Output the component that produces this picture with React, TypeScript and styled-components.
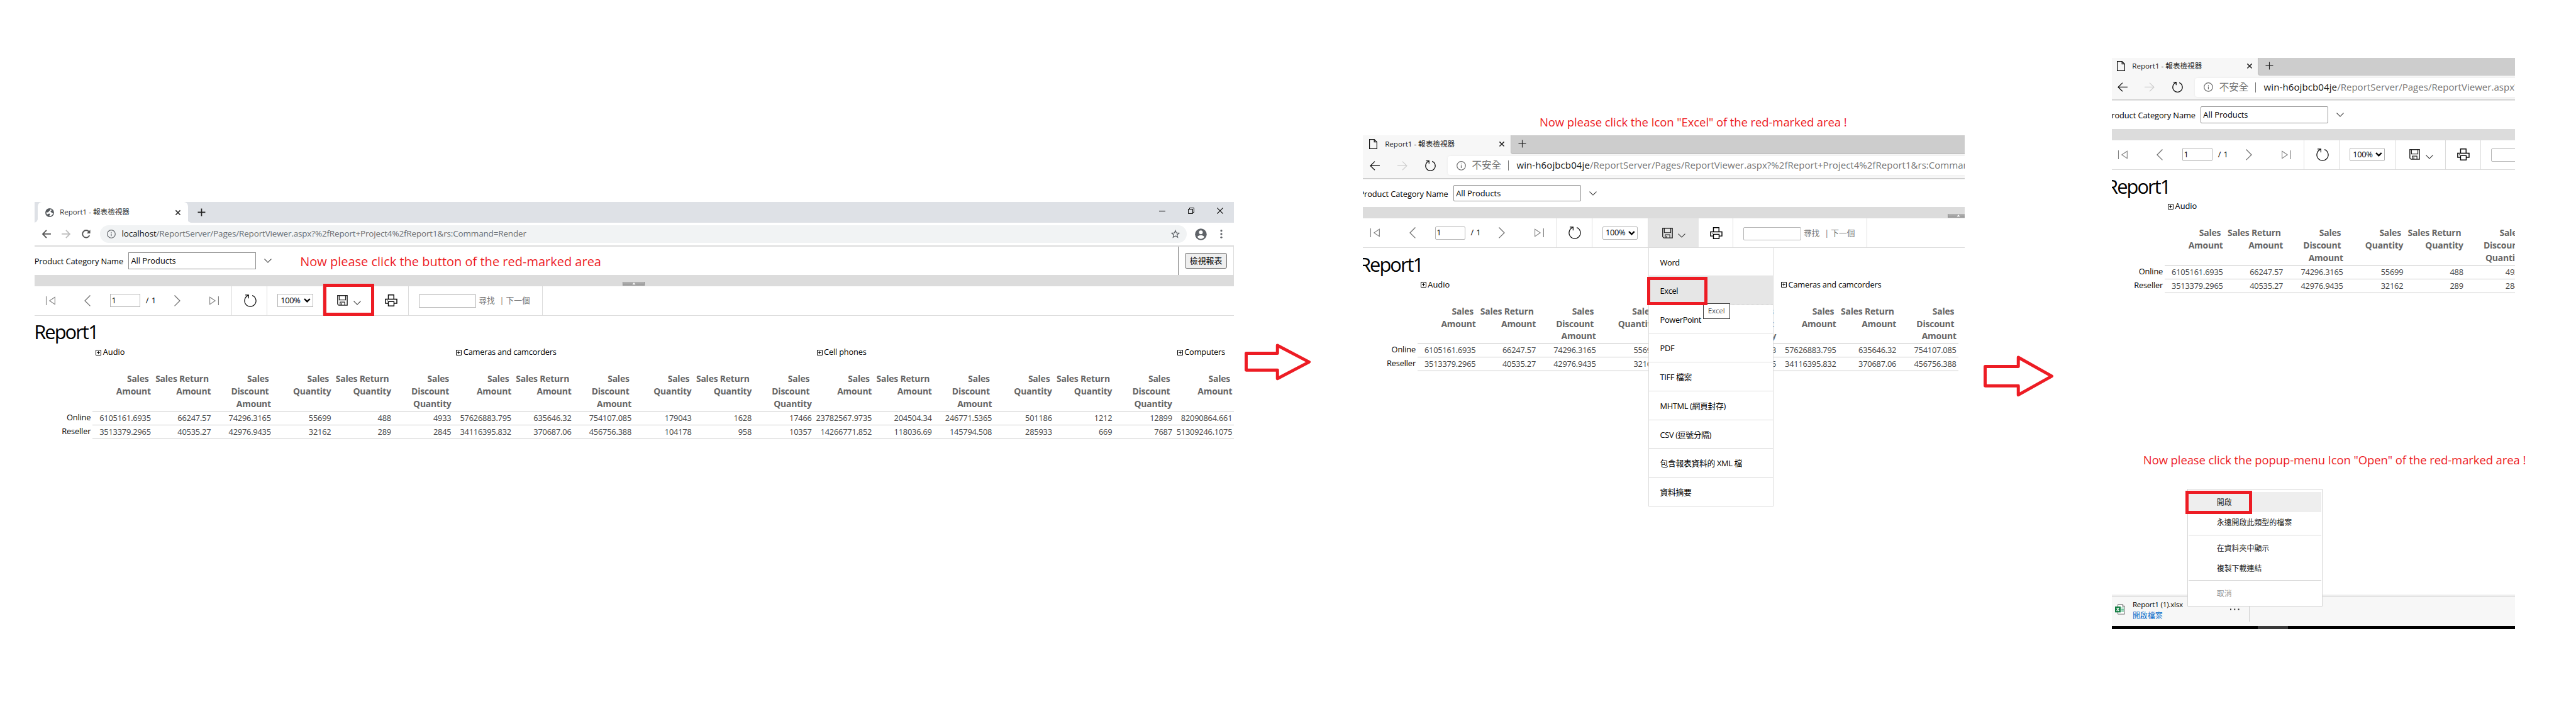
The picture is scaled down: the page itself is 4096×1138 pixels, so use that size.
import React from 'react';
import styled, { createGlobalStyle, css } from 'styled-components';

const Global = createGlobalStyle`
  html, body { margin: 0; padding: 0; background: #fff; overflow: hidden; }
  * { box-sizing: border-box; }
  svg { display: block; flex: none; overflow: visible; }
`;

const SCALE = 4096 / 4116;
const RED = '#ed1c24';
const LINE = '#dcdcdc';

const Stage = styled.main`
  zoom: ${SCALE};
  display: flex;
  align-items: flex-start;
  width: 4116px;
  height: 1143px;
  padding-left: 55px;
  overflow: hidden;
  background: #fff;
  color: #000;
  font-family: 'Open Sans', 'Noto Sans CJK TC', sans-serif;
  font-size: 12.9px;
  line-height: 20px;
  white-space: pre;
`;

const Step = styled.section<{ $left?: number; $top: number; $w: number }>`
  position: relative;
  flex: none;
  margin: ${p => p.$top}px 0 0 ${p => p.$left ?? 0}px;
  width: ${p => p.$w}px;
`;

const Window = styled.div<{ $h: number }>`
  display: flex;
  flex-direction: column;
  width: 100%;
  height: ${p => p.$h}px;
  overflow: hidden;
  background: #fff;
`;

const ArrowBox = styled.div<{ $left: number; $top: number }>`
  flex: none;
  margin: ${p => p.$top}px 0 0 ${p => p.$left}px;
`;

const Note = styled.p<{ $size: number; $ls: number }>`
  margin: 0;
  color: ${RED};
  font-size: ${p => p.$size}px;
  letter-spacing: ${p => p.$ls}px;
  line-height: 30px;
`;
const InlineNote = styled(Note)`
  margin-left: 45px;
  padding-top: 2px;
`;
const TopNote = styled(Note)`
  padding-left: 282px;
  margin-bottom: 6px;
`;
const FloatingNote = styled(Note)`
  position: absolute;
  left: 50.5px;
  top: 628px;
`;

const RedMark = styled.div<{ $x: number; $y: number; $w: number; $h: number }>`
  position: absolute;
  z-index: 5;
  left: ${p => p.$x}px;
  top: ${p => p.$y}px;
  width: ${p => p.$w}px;
  height: ${p => p.$h}px;
  border: 5.04px solid ${RED};
`;

/* ---------- Chrome ---------- */

const ChromeStrip = styled.div`
  display: flex;
  flex: none;
  align-items: center;
  height: 33px;
  padding: 0 18px 0 5px;
  background: #dee1e6;
`;
const ChromeTab = styled.div`
  position: relative;
  display: flex;
  align-items: center;
  width: 240px;
  height: 33px;
  padding: 0 12px 0 12.5px;
  border-radius: 7px 7px 0 0;
  background: #fff;
  &::before, &::after {
    content: '';
    position: absolute;
    bottom: 0;
    width: 6px;
    height: 6px;
  }
  &::before { left: -6px; background: radial-gradient(circle at 0 0, transparent 5.5px, #fff 6.2px); }
  &::after { right: -6px; background: radial-gradient(circle at 100% 0, transparent 5.5px, #fff 6.2px); }
`;
const TabText = styled.span`
  flex: 1;
  font-size: 11.7px;
  letter-spacing: -0.02px;
  color: #333;
`;
const ChromeTabText = styled(TabText)`
  margin-left: 9px;
  padding-bottom: 2px;
`;
const StripPlus = styled.div`
  flex: 1;
  padding-left: 15.5px;
`;
const Controls = styled.div`
  display: flex;
  align-items: center;
  gap: 36px;
  padding-bottom: 6px;
`;
const ChromeBar = styled.div`
  display: flex;
  flex: none;
  align-items: center;
  height: 38px;
  padding: 0 19px 0 12px;
  border-bottom: 2.03px solid #dcdcdc;
`;
const ChromeNav = styled.div`
  display: flex;
  align-items: center;
  gap: 18px;
  width: 93px;
`;
const Pill = styled.div`
  display: flex;
  align-items: center;
  width: 1736px;
  height: 28px;
  padding: 0 11px;
  border-radius: 14px;
  background: #f1f3f4;
`;
const PillUrl = styled.span`
  flex: 1;
  margin-left: 9.5px;
  font-size: 13.6px;
  letter-spacing: -0.175px;
  color: #6a6e73;
`;
const Host = styled.span`
  color: #111;
`;
const Profile = styled.div`
  display: flex;
  flex: 1;
  align-items: center;
  justify-content: space-between;
  padding-left: 13px;
`;

/* ---------- Edge ---------- */

const EdgeHead = styled.div<{ $clipped?: boolean }>`
  flex: none;
  height: 70px;
  background: #f7f7f7;
  border-bottom: 1px solid #e2e2e2;
  ${p => p.$clipped && css`margin: -1px 0 0 -2px;`}
`;
const EdgeStrip = styled.div`
  display: flex;
  height: 30px;
`;
const EdgeTab = styled.div`
  display: flex;
  align-items: center;
  width: 236px;
  padding: 0 10px 2px 10px;
`;
const EdgeTabText = styled(TabText)`
  margin-left: 12px;
  color: #222;
`;
const EdgeStripRest = styled.div`
  flex: 1;
  padding: 7px 0 0 11px;
  border-bottom: 1px solid #b9b9b9;
  border-left: 1px solid #bcbcbc;
  border-bottom-left-radius: 4px;
  background: #cdcdcd;
`;
const EdgeBar = styled.div`
  display: flex;
  align-items: center;
  height: 39px;
  padding: 0 0 1px 11px;
  border-bottom: 1px solid #c9c9c9;
`;
const EdgeNav = styled.div`
  display: flex;
  flex: none;
  align-items: center;
  gap: 28px;
  width: 124px;
`;
const EdgeField = styled.div`
  display: flex;
  flex: 1;
  min-width: 0;
  align-items: center;
  height: 30px;
  padding-left: 14px;
  border-radius: 4px 0 0 4px;
  background: #fff;
  box-shadow: 0 0 3px #e6e6e6;
  overflow: hidden;
`;
const Insecure = styled.span`
  flex: none;
  margin-left: 10px;
  padding-right: 11px;
  font-size: 15.6px;
  color: #767676;
`;
const FieldRule = styled.i`
  flex: none;
  width: 1px;
  height: 16px;
  background: #767676;
`;
const EdgeUrl = styled.span`
  flex: none;
  margin-left: 12.5px;
  font-size: 15.1px;
  letter-spacing: 0.02px;
  color: #767676;
`;
const EdgeHost = styled(Host)`
  letter-spacing: 0.1px;
`;

/* ---------- Report viewer ---------- */

const Viewer = styled.div<{ $clip: number }>`
  flex: 1;
  margin-left: -${p => p.$clip}px;
`;
const Params = styled.div`
  display: flex;
  align-items: center;
  height: 45px;
`;
const ParamLabel = styled.label`
  width: 150px;
  padding: 3px 0 0 0;
  letter-spacing: -0.08px;
`;
const ParamInput = styled.div<{ $round?: boolean }>`
  width: 204px;
  height: 27px;
  margin-right: 13.5px;
  padding-left: 3.5px;
  border: 1px solid #8f8f8f;
  border-radius: ${p => (p.$round ? 2 : 0)}px;
  line-height: 26px;
`;
const ViewCell = styled.div`
  display: flex;
  align-items: center;
  justify-content: center;
  width: 90px;
  height: 45px;
  margin-left: auto;
  border-left: 1px solid #777;
  border-right: 1px solid #ddd;
`;
const ViewButton = styled.button`
  width: 68px;
  height: 25px;
  padding: 0;
  border: 1px solid #6e6e6e;
  border-radius: 3px;
  background: #efefef;
  color: #000;
  font: 13px/22px 'Open Sans', 'Noto Sans CJK TC', sans-serif;
`;
const Splitter = styled.div`
  height: 18px;
  padding: 11px 0 0 940px;
  background: #dcdcdc;
`;
const Handle = styled.div`
  display: flex;
  justify-content: center;
  width: 35px;
  height: 6px;
  border-left: 1px solid #8c8c8c;
  border-right: 1px solid #8c8c8c;
  background: linear-gradient(#b4b4b4, #979797);
`;
const Toolbar = styled.div`
  display: flex;
  height: 47px;
  border-bottom: 1px solid ${LINE};
`;
const Group = styled.div<{ $w: number; $pad: number; $active?: boolean }>`
  position: relative;
  display: flex;
  flex: none;
  align-items: center;
  width: ${p => p.$w}px;
  padding-left: ${p => p.$pad}px;
  border-right: 1px solid ${LINE};
  ${p => p.$active && css`background: #e6e6e6; border-color: #e6e6e6; box-shadow: -1px 0 0 #dedede;`}
`;
const Slot = styled.span<{ $gap: number }>`
  flex: none;
  margin-left: ${p => p.$gap}px;
`;
const PageCount = styled.span`
  flex: none;
  width: 17px;
  margin-left: 9px;
  letter-spacing: 0.4px;
`;
const Box = styled.div<{ $w: number; $round?: boolean; $low?: boolean }>`
  display: flex;
  flex: none;
  align-items: center;
  width: ${p => p.$w}px;
  height: 21px;
  margin-top: ${p => (p.$low ? 2 : 0)}px;
  border: 1px solid #b5b5b5;
  border-radius: ${p => (p.$round ? 2 : 0)}px;
  background: #fff;
`;
const PageNumber = styled.span`
  padding-left: 1.5px;
`;
const ZoomValue = styled.span`
  width: 36px;
  padding-left: 4.5px;
  letter-spacing: -0.32px;
`;
const FindLink = styled.span<{ $gap: number }>`
  margin: 1px 0 0 ${p => p.$gap}px;
  font-size: 12.8px;
  color: #777;
`;
const DropArrow = styled.span`
  margin: 8px 0 0 9px;
`;

/* ---------- Report ---------- */

const Title = styled.h1`
  height: 44px;
  margin: 5px 0 0 -0.5px;
  font-size: 31px;
  font-weight: 400;
  letter-spacing: -1.95px;
  line-height: 44px;
`;
const Grid = styled.div`
  display: grid;
  grid-template-columns: 93px repeat(19, 96px);
`;
const GroupCell = styled.div<{ $span: number }>`
  grid-column: span ${p => p.$span};
  display: flex;
  align-items: center;
  gap: 2.5px;
  height: 41px;
  padding: 0 0 21px 5px;
`;
const GroupName = styled.span<{ $ls: number }>`
  letter-spacing: ${p => p.$ls}px;
`;
const Head = styled.div`
  height: 63px;
  padding: 1px 3px 0 0;
  border-bottom: 1px solid #c9c9c9;
  color: #666;
  font-size: 14px;
  font-weight: 700;
  letter-spacing: -0.2px;
  line-height: 20px;
  text-align: right;
`;
const RowLabel = styled.div`
  height: 22px;
  padding-right: 3px;
  letter-spacing: -0.17px;
  line-height: 20px;
  text-align: right;
`;
const Cell = styled.div`
  height: 22px;
  padding-right: 3px;
  border-bottom: 1px solid #c9c9c9;
  color: #444;
  letter-spacing: -0.206px;
  line-height: 22px;
  text-align: right;
`;

/* ---------- Menus ---------- */

const ExportMenu = styled.div`
  position: absolute;
  z-index: 3;
  left: 0;
  top: 46px;
  width: 200px;
  border: 1px solid ${LINE};
  border-bottom: 0;
  background: #fff;
`;
const ExportItem = styled.div<{ $hot?: boolean; $first?: boolean }>`
  position: relative;
  height: ${p => (p.$first ? 45 : 46)}px;
  padding: 1px 0 0 17.5px;
  border-bottom: 1px ${p => (p.$hot ? 'dotted #cfcfcf' : `solid ${LINE}`)};
  background: ${p => (p.$hot ? '#e6e6e6' : '#fff')};
  letter-spacing: -0.35px;
  line-height: 45px;
`;
const Tooltip = styled.div`
  position: absolute;
  z-index: 4;
  left: 86px;
  top: 43px;
  width: 43px;
  height: 25px;
  padding-left: 7px;
  border: 1px solid #3a3a3a;
  background: #fff;
  color: #575757;
  font-size: 11.7px;
  letter-spacing: -0.15px;
  line-height: 23px;
`;
const Downloads = styled.div`
  display: flex;
  flex: none;
  height: 50px;
  border-top: 2.03px solid #eeeeee;
  background: #f7f7f7;
`;
const DownloadsInner = styled.div`
  display: flex;
  flex: 1;
  border-top: 1px solid #c9c9c9;
`;
const DownloadItem = styled.div`
  position: relative;
  display: flex;
  align-items: center;
  width: 221px;
  height: 40px;
  padding-left: 5px;
  border-right: 1px solid #cfcfcf;
`;
const FileText = styled.div`
  width: 156px;
  margin-left: 12.5px;
  padding-top: 3px;
  font-size: 11.7px;
  line-height: 17px;
`;
const FileName = styled.div`
  letter-spacing: -0.22px;
`;
const OpenLink = styled.div`
  font-size: 12px;
  color: #0b6fcb;
`;
const Taskbar = styled.div`
  flex: none;
  height: 5px;
  padding-left: 234px;
  background: #000;
`;
const TaskActive = styled.div`
  width: 48px;
  height: 5px;
  background: #383838;
`;
const FileMenu = styled.div`
  position: absolute;
  left: 121px;
  top: 689px;
  width: 216px;
  height: 188px;
  padding: 4px 1px;
  border: 1px solid #d5d5d5;
  background: #fff;
`;
const FileMenuItem = styled.div<{ $hot?: boolean; $off?: boolean }>`
  height: 32px;
  padding-left: 45px;
  background: ${p => (p.$hot ? '#eeeeee' : '#fff')};
  color: ${p => (p.$off ? '#9b9b9b' : '#222')};
  font-size: 12px;
  line-height: 33px;
`;
const FileMenuRule = styled.div`
  height: 9px;
  padding-top: 4px;
  &::before { content: ''; display: block; height: 1px; background: #d8d8d8; }
`;

/* ---------- Icons ---------- */

const Line: React.FC<{ w: number; h: number; c?: string; s?: number; d: string }> = ({ w, h, c = '#000', s = 1.2, d }) => (
  <svg width={w} height={h} fill="none" stroke={c} strokeWidth={s}><path d={d} /></svg>
);

const FirstPage = () => <Line w={15} h={14} c="#808080" s={1.1} d="M.5 0V14M14.4 1.2L5.8 7L14.4 12.8Z" />;
const LastPage = () => <Line w={15} h={14} c="#808080" s={1.1} d="M14.5 0V14M.6 1.2L9.2 7L.6 12.8Z" />;
const Prev = () => <Line w={10} h={18} c="#707070" s={1.3} d="M9.5 .5L1 9L9.5 17.5" />;
const Next = () => <Line w={10} h={18} c="#707070" s={1.3} d="M.5 .5L9 9L.5 17.5" />;
const Chevron: React.FC<{ c?: string }> = ({ c = '#333' }) => <Line w={12} h={7} c={c} s={1.1} d="M.5 .6L6 6.1L11.5 .6" />;
const Refresh: React.FC<{ s?: number }> = ({ s = 20 }) => (
  <svg width={s} height={s} viewBox="0 0 20 20" fill="none" stroke="#111" strokeWidth={20 / s * 1.25}>
    <path d="M13.2 1.6A9.1 9.1 0 1 1 6.6 1.7M2 .8H7.4V6.2" />
  </svg>
);
const Save = () => (
  <svg width="17" height="17" fill="none" stroke="#222" strokeWidth="1.4">
    <path d="M.8 .8H16.2V16.2H2.6L.8 14.4Z" />
    <path d="M3.4 .8V7.8H13.6V.8M4.8 16V11.2H12.2V16M7.2 13V16" strokeWidth="1.2" />
  </svg>
);
const Printer = () => (
  <svg width="20" height="19" fill="none" stroke="#000" strokeWidth="1.4">
    <path d="M5.5 7.4V.7H14.3V7.4M5.5 14.2H.9V7.6H19.1V14.2H14.5" />
    <path d="M5.5 11.4H14.5V18.3H5.5Z" />
    <path d="M3 10H4.4" strokeWidth="1" />
  </svg>
);
const Expand = () => (
  <svg width="9" height="9" fill="none" stroke="#000" strokeWidth="1">
    <path d="M.5 .5H8.5V8.5H.5ZM2.2 4.5H6.8M4.5 2.2V6.8" />
  </svg>
);
const Plus: React.FC<{ s?: number }> = ({ s = 1.2 }) => <Line w={13} h={13} c="#222" s={s} d="M6.5 .5V12.5M.5 6.5H12.5" />;
const Close = () => <Line w={8} h={8} c="#222" s={1.5} d="M.4 .4L7.6 7.6M7.6 .4L.4 7.6" />;
const Info: React.FC<{ s: number; c: string }> = ({ s, c }) => (
  <svg width={s} height={s} viewBox="0 0 15 15" fill="none" stroke={c} strokeWidth="1.2">
    <circle cx="7.5" cy="7.5" r="6.8" /><path d="M7.5 6.6V11M7.5 4V5.3" />
  </svg>
);
const Doc = () => <Line w={13} h={16} c="#111" s={1.2} d="M.6 .6H8.2L12.4 4.8V15.4H.6ZM8.2 .6V4.8H12.4" />;
const Globe = () => (
  <svg width="14" height="14" viewBox="0 0 14 14">
    <circle cx="7" cy="7" r="7" fill="#565a5e" />
    <path d="M7.6 1.5C8.4 2.6 7.6 3.6 6.4 4.2C5.4 4.7 5.8 5.8 4.8 6.2C3.6 6.6 2.4 6.4 1.5 6.6C1.6 8 2 9 2.8 9.9C4.4 9.6 4.6 8.6 6.2 8.6C7.6 8.6 8 9.8 7.2 10.8C6.6 11.5 6.4 12 6.4 12.5C9.6 12.8 12.5 10.4 12.5 7.4C11.6 8 10.6 7.6 10.2 6.8C9.8 6 8.4 6.4 8.4 5.2C8.4 4.2 10 4.2 10.4 2.8C9.6 2 8.6 1.6 7.6 1.5Z" fill="#fff" />
  </svg>
);
const ChromeArrow: React.FC<{ c: string; flip?: boolean }> = ({ c, flip }) => (
  <Line w={14} h={14} c={c} s={1.8} d={flip ? 'M0 7H12.6M7 .8L13 7L7 13.2' : 'M14 7H1.4M7 .8L1 7L7 13.2'} />
);
const EdgeArrow: React.FC<{ c: string; flip?: boolean }> = ({ c, flip }) => (
  <Line w={16} h={15} c={c} s={1.3} d={flip ? 'M0 7.5H15M8 .6L15 7.5L8 14.4' : 'M16 7.5H1M8 .6L1 7.5L8 14.4'} />
);
const Reload = () => (
  <svg width="14" height="14" fill="none" stroke="#555" strokeWidth="1.9">
    <path d="M12.3 9.2A5.8 5.8 0 1 1 11.4 3.1" /><path d="M13.6 .3V6H7.9Z" fill="#555" stroke="none" />
  </svg>
);
const Star = () => (
  <svg width="14" height="14" viewBox="0 0 14 14" fill="none" stroke="#5f6368" strokeWidth="1.3">
    <path d="M7 1.4L8.6 5.2L12.8 5.5L9.6 8.2L10.6 12.3L7 10.1L3.4 12.3L4.4 8.2L1.2 5.5L5.4 5.2Z" />
  </svg>
);
const Person = () => (
  <svg width="19" height="19" viewBox="0 0 19 19">
    <circle cx="9.5" cy="9.5" r="9.3" fill="#5f6368" />
    <circle cx="9.5" cy="6.2" r="3" fill="#fff" />
    <path d="M3.9 13.6C5.2 11.3 7.6 11 9.5 11S13.8 11.3 15.1 13.6C13.8 15.6 11.7 16.8 9.5 16.8S5.2 15.6 3.9 13.6Z" fill="#fff" />
  </svg>
);
const Dots = () => (
  <svg width="4" height="14" fill="#5f6368"><circle cx="2" cy="1.7" r="1.6" /><circle cx="2" cy="7" r="1.6" /><circle cx="2" cy="12.3" r="1.6" /></svg>
);
const More = () => (
  <svg width="15" height="3" fill="#222"><path d="M0 .5H2V2.5H0ZM6.3 .5H8.3V2.5H6.3ZM12.6 .5H14.6V2.5H12.6Z" /></svg>
);
const ExcelFile = () => (
  <svg width="16" height="17" viewBox="0 0 16 17">
    <path d="M4.6 .6H12L15.4 4V16.2H4.6Z" fill="#fff" stroke="#777" />
    <path d="M12 .6V4H15.4" fill="#ccc" stroke="#777" />
    <path d="M10 6.3H14M10 8.8H14M10 11.2H14" stroke="#21a366" strokeWidth="1.2" />
    <rect y="4" width="9" height="9.4" fill="#107c41" />
    <path d="M2.6 6.2L6.3 11.2M6.3 6.2L2.6 11.2" stroke="#fff" strokeWidth="1.3" />
  </svg>
);
const Triangle = () => <svg width="6" height="6"><path d="M.5 4.2L3 1L5.5 4.2Z" fill="#fff" /></svg>;

/* ---------- Data ---------- */

const ONLINE = ['6105161.6935', '66247.57', '74296.3165', '55699', '488', '4933', '57626883.795', '635646.32', '754107.085', '179043', '1628', '17466', '23782567.9735', '204504.34', '246771.5365', '501186', '1212', '12899', '82090864.661'];
const RESELLER = ['3513379.2965', '40535.27', '42976.9435', '32162', '289', '2845', '34116395.832', '370687.06', '456756.388', '104178', '958', '10357', '14266771.852', '118036.69', '145794.508', '285933', '669', '7687', '51309246.1075'];
const HEADS = ['Sales \nAmount', 'Sales Return \nAmount', 'Sales \nDiscount \nAmount', 'Sales \nQuantity', 'Sales Return \nQuantity', 'Sales \nDiscount \nQuantity'];
const GROUPS: [string, number, number][] = [['Audio', 0, 6], ['Cameras and camcorders', -0.236, 6], ['Cell phones', -0.2, 6], ['Computers', -0.2, 1]];
const FORMATS = ['Word', 'Excel', 'PowerPoint', 'PDF', 'TIFF 檔案', 'MHTML (網頁封存)', 'CSV (逗號分隔)', '包含報表資料的 XML 檔', '資料摘要'];

const Report: React.FC<{ groups: number; cols: number }> = ({ groups, cols }) => (
  <>
    <Title>Report1</Title>
    <Grid>
      <div />
      {GROUPS.slice(0, groups).map(([g, ls, span]) => (
        <GroupCell key={g} $span={span}><Expand /><GroupName $ls={ls}>{g}</GroupName></GroupCell>
      ))}
    </Grid>
    <Grid>
      <div />
      {ONLINE.slice(0, cols).map((_, i) => <Head key={i}>{HEADS[i % 6]}</Head>)}
    </Grid>
    <Grid>
      <RowLabel>Online</RowLabel>
      {ONLINE.slice(0, cols).map((v, i) => <Cell key={i}>{v}</Cell>)}
    </Grid>
    <Grid>
      <RowLabel>Reseller</RowLabel>
      {RESELLER.slice(0, cols).map((v, i) => <Cell key={i}>{v}</Cell>)}
    </Grid>
  </>
);

interface ViewerProps {
  clip?: number;
  round?: boolean;
  note?: React.ReactNode;
  viewButton?: boolean;
  handle?: boolean;
  find?: boolean;
  active?: boolean;
  saveExtra?: React.ReactNode;
  groups: number;
  cols: number;
}

const ReportViewer: React.FC<ViewerProps> = ({ clip = 0, round, note, viewButton, handle, find, active, saveExtra, groups, cols }) => (
  <Viewer $clip={clip}>
    <Params>
      <ParamLabel>Product Category Name</ParamLabel>
      <ParamInput $round={round}>All Products</ParamInput>
      <Chevron />
      {note}
      {viewButton && <ViewCell><ViewButton>檢視報表</ViewButton></ViewCell>}
    </Params>
    <Splitter>{handle && <Handle><Triangle /></Handle>}</Splitter>
    <Toolbar>
      <Group $w={316} $pad={18}>
        <FirstPage />
        <Slot $gap={47}><Prev /></Slot>
        <Slot $gap={31}><Box $w={48} $round={round}><PageNumber>1</PageNumber></Box></Slot>
        <PageCount>/ 1</PageCount>
        <Slot $gap={28}><Next /></Slot>
        <Slot $gap={47}><LastPage /></Slot>
      </Group>
      <Group $w={56} $pad={18.7}><Refresh /></Group>
      <Group $w={90} $pad={16}>
        <Box $w={57} $round={round}>
          <ZoomValue>100%</ZoomValue>
          <Slot $gap={5}><Line w={11} h={7} s={2.4} d="M1 1L5.4 5.4L9.8 1" /></Slot>
        </Box>
      </Group>
      <Group $w={80} $pad={21.5} $active={active}>
        <Save />
        <DropArrow><Chevron /></DropArrow>
        {saveExtra}
      </Group>
      <Group $w={56} $pad={18.5}><Printer /></Group>
      <Group $w={214} $pad={16}>
        <Box $w={92} $round={round} $low />
        {find && (<><FindLink $gap={4}>尋找</FindLink><FindLink $gap={8}>|</FindLink><FindLink $gap={3}>下一個</FindLink></>)}
      </Group>
    </Toolbar>
    <Report groups={groups} cols={cols} />
  </Viewer>
);

const EdgeChrome: React.FC<{ clipped?: boolean; path: string }> = ({ clipped, path }) => (
  <EdgeHead $clipped={clipped}>
    <EdgeStrip>
      <EdgeTab><Doc /><EdgeTabText>Report1 - 報表檢視器</EdgeTabText><Close /></EdgeTab>
      <EdgeStripRest><Plus s={1.1} /></EdgeStripRest>
    </EdgeStrip>
    <EdgeBar>
      <EdgeNav><EdgeArrow c="#111" /><EdgeArrow c="#cfcfcf" flip /><Refresh s={17} /></EdgeNav>
      <EdgeField>
        <Info s={15} c="#6a6a6a" />
        <Insecure>不安全</Insecure>
        <FieldRule />
        <EdgeUrl><EdgeHost>win-h6ojbcb04je</EdgeHost>{path}</EdgeUrl>
      </EdgeField>
    </EdgeBar>
  </EdgeHead>
);

export default function App() {
  return (
    <>
      <Global />
      <Stage>
        <Step $top={323} $w={1917}>
          <Window $h={400}>
            <ChromeStrip>
              <ChromeTab><Globe /><ChromeTabText>Report1 - 報表檢視器</ChromeTabText><Close /></ChromeTab>
              <StripPlus><Plus s={1.7} /></StripPlus>
              <Controls>
                <Line w={10} h={10} s={1.1} d="M0 5.5H10" />
                <Line w={10} h={10} s={1} d="M.5 2.5H7.5V9.5H.5ZM2.5 2.5V.5H9.5V7.5H7.5" />
                <Line w={10} h={10} s={1.1} d="M.3 .3L9.7 9.7M9.7 .3L.3 9.7" />
              </Controls>
            </ChromeStrip>
            <ChromeBar>
              <ChromeNav><ChromeArrow c="#555" /><ChromeArrow c="#bdbdbd" flip /><Reload /></ChromeNav>
              <Pill>
                <Info s={14} c="#5f6368" />
                <PillUrl><Host>localhost</Host>/ReportServer/Pages/ReportViewer.aspx?%2fReport+Project4%2fReport1&amp;rs:Command=Render</PillUrl>
                <Star />
              </Pill>
              <Profile><Person /><Dots /></Profile>
            </ChromeBar>
            <ReportViewer
              viewButton handle find groups={4} cols={19}
              note={<InlineNote $size={20.1} $ls={0}>Now please click the button of the red-marked area</InlineNote>}
              saveExtra={<RedMark $x={0} $y={-4} $w={81} $h={51} />}
            />
          </Window>
        </Step>

        <ArrowBox $left={17} $top={549}>
          <svg width="106" height="59" fill="none" stroke={RED} strokeWidth="5" strokeLinejoin="round">
            <path d="M2.5 15.5H52.5V3L103 29.5L52.5 56V42.5H2.5Z" />
          </svg>
        </ArrowBox>

        <Step $left={83} $top={180} $w={961}>
          <TopNote $size={18.6} $ls={-0.1}>Now please click the Icon "Excel" of the red-marked area !</TopNote>
          <Window $h={620}>
            <EdgeChrome path="/ReportServer/Pages/ReportViewer.aspx?%2fReport+Project4%2fReport1&rs:Comman" />
            <ReportViewer
              clip={6} round handle find active groups={2} cols={9}
              saveExtra={
                <ExportMenu>
                  {FORMATS.map((f, i) => (
                    <ExportItem key={f} $first={i === 0} $hot={i === 1}>
                      {f}
                      {i === 1 && (<><Tooltip>Excel</Tooltip><RedMark $x={-3} $y={1} $w={96} $h={45} /></>)}
                    </ExportItem>
                  ))}
                </ExportMenu>
              }
            />
          </Window>
        </Step>

        <ArrowBox $left={30} $top={568}>
          <svg width="112" height="66" fill="none" stroke={RED} strokeWidth="5" strokeLinejoin="round">
            <path d="M2.5 17.5H55.5V3L109 33L55.5 63V48.5H2.5Z" />
          </svg>
        </ArrowBox>

        <Step $left={93} $top={92} $w={645}>
          <Window $h={913}>
            <EdgeChrome clipped path="/ReportServer/Pages/ReportViewer.aspx?" />
            <ReportViewer clip={8} round groups={1} cols={6} />
            <Downloads>
              <DownloadsInner>
                <DownloadItem>
                  <ExcelFile />
                  <FileText><FileName>Report1 (1).xlsx</FileName><OpenLink>開啟檔案</OpenLink></FileText>
                  <More />
                </DownloadItem>
              </DownloadsInner>
            </Downloads>
            <Taskbar><TaskActive /></Taskbar>
          </Window>
          <FloatingNote $size={18.6} $ls={-0.1}>Now please click the popup-menu Icon "Open" of the red-marked area !</FloatingNote>
          <FileMenu>
            <FileMenuItem $hot>開啟</FileMenuItem>
            <FileMenuItem>永遠開啟此類型的檔案</FileMenuItem>
            <FileMenuRule />
            <FileMenuItem>在資料夾中顯示</FileMenuItem>
            <FileMenuItem>複製下載連結</FileMenuItem>
            <FileMenuRule />
            <FileMenuItem $off>取消</FileMenuItem>
          </FileMenu>
          <RedMark $x={118} $y={692} $w={107} $h={37} />
        </Step>
      </Stage>
    </>
  );
}
